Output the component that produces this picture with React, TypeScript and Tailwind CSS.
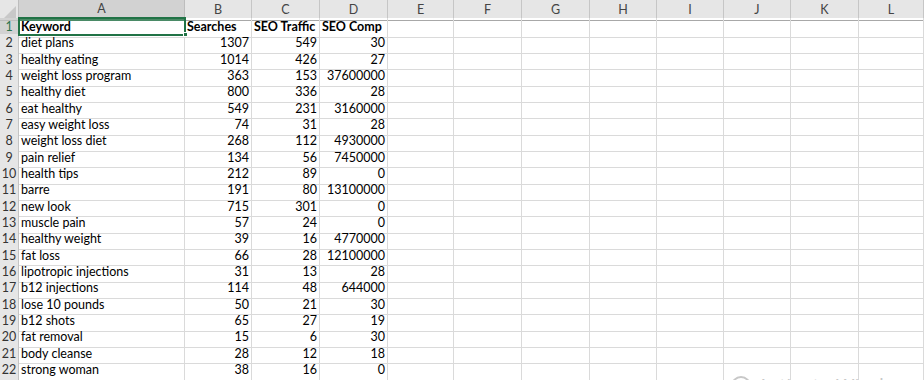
import React from "react";

const cols = ["A", "B", "C", "D", "E", "F", "G", "H", "I", "J", "K", "L"];

const data: [string, string, string, string][] = [
  ["diet plans", "1307", "549", "30"],
  ["healthy eating", "1014", "426", "27"],
  ["weight loss program", "363", "153", "37600000"],
  ["healthy diet", "800", "336", "28"],
  ["eat healthy", "549", "231", "3160000"],
  ["easy weight loss", "74", "31", "28"],
  ["weight loss diet", "268", "112", "4930000"],
  ["pain relief", "134", "56", "7450000"],
  ["health tips", "212", "89", "0"],
  ["barre", "191", "80", "13100000"],
  ["new look", "715", "301", "0"],
  ["muscle pain", "57", "24", "0"],
  ["healthy weight", "39", "16", "4770000"],
  ["fat loss", "66", "28", "12100000"],
  ["lipotropic injections", "31", "13", "28"],
  ["b12 injections", "114", "48", "644000"],
  ["lose 10 pounds", "50", "21", "30"],
  ["b12 shots", "65", "27", "19"],
  ["fat removal", "15", "6", "30"],
  ["body cleanse", "28", "12", "18"],
  ["strong woman", "38", "16", "0"],
];

const gridCols =
  "grid grid-cols-[19px_166px_67px_68px_68px_66px_68px_68px_67px_67px_67px_68px_1fr]";

export default function App() {
  const rows: string[][] = [
    ["Keyword", "Searches", "SEO Traffic", "SEO Comp"],
    ...data,
  ];
  return (
    <div
      className="relative w-[924px] h-[380px] overflow-hidden bg-white text-[12.5px] text-black"
      style={{ fontFamily: "Lato, 'Liberation Sans', sans-serif" }}
    >
      {/* header */}
      <div className={`${gridCols} h-[18px] bg-[#e6e6e6]`}>
        <div className="relative border-r border-b border-[#bdbdbd]">
          <svg className="absolute right-[2px] bottom-[2px]" width="12" height="12" viewBox="0 0 12 12">
            <polygon points="12,0 12,12 0,12" fill="#c8c8c8" />
          </svg>
        </div>
        {cols.map((c, i) => (
          <div
            key={c}
            className={
              i === 0
                ? "flex items-center justify-center bg-[#d2d2d2] text-[#444] border-r border-[#bdbdbd] border-b-2 border-b-[#4a8a66]"
                : "flex items-center justify-center text-[#444] border-r border-b border-[#c6c6c6] border-b-[#a8a8a8]"
            }
          >
            {c}
          </div>
        ))}
      </div>
      {rows.map((r, ri) => (
        <div key={ri} className={`${gridCols} h-[16.33px]`}>
          <div
            className={
              ri === 0
                ? "flex items-center justify-center bg-[#d2d2d2] text-[#2e7550] border-r border-b border-[#c4c4c4]"
                : "flex items-center justify-center bg-[#e6e6e6] text-[#333] border-r border-b border-[#c4c4c4]"
            }
          >
            {ri + 1}
          </div>
          {cols.map((c, ci) => {
            const v = ci < 4 ? r[ci] : "";
            const isText = ri === 0 || ci === 0;
            return (
              <div
                key={c}
                className={`flex items-center overflow-visible whitespace-nowrap border-r border-b border-[#dadada] px-[2px] leading-none ${
                  isText ? "justify-start" : "justify-end"
                } ${ri === 0 ? "font-bold" : ""}`}
              >
                {v}
              </div>
            );
          })}
        </div>
      ))}
      {/* selection border on A1 */}
      <div className="absolute left-[18px] top-[17px] w-[168px] h-[18.5px] border-2 border-[#217346] pointer-events-none" />
      <div className="absolute left-[183px] top-[32px] w-[5px] h-[5px] bg-[#217346] border border-white pointer-events-none" />
      {/* watermark */}
      <div className="absolute left-[731px] top-[371px] flex items-center gap-[6px] text-[#c8c8c8] text-[20px] pointer-events-none whitespace-nowrap" style={{ fontFamily: "'Open Sans', sans-serif" }}>
        <div className="w-[20px] h-[20px] rounded-full border-2 border-[#c8c8c8]" />
        <span>Activate Windows</span>
      </div>
    </div>
  );
}
